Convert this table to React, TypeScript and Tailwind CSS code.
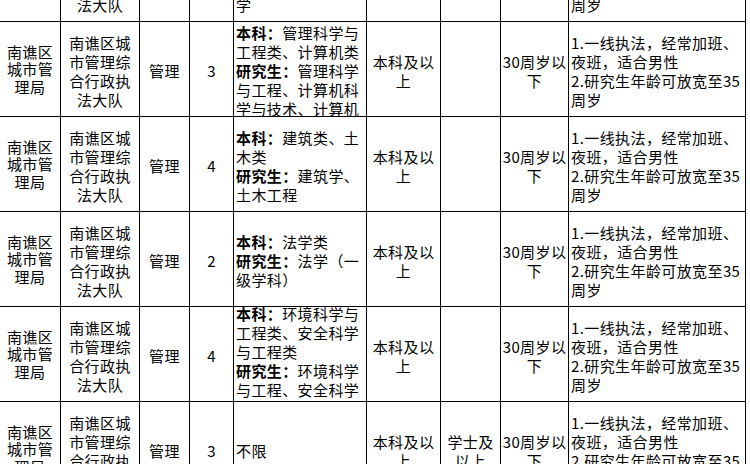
import type { ReactNode } from "react";

type Row = {
  major: string[];
  count: string;
  degree?: string[];
  majorTop?: boolean;
};

const bureau = ["南谯区", "城市管", "理局"];
const unit = ["南谯区城", "市管理综", "合行政执", "法大队"];
const edu = ["本科及以", "上"];
const age = ["30周岁以", "下"];
const note = ["1.一线执法，经常加班、", "夜班，适合男性", "2.研究生年龄可放宽至35", "周岁"];

const rows: Row[] = [
  { major: ["本科：汉语言文学", "、新闻学", "研究生：新闻传播", "学"], count: "2" },
  {
    major: ["本科：管理科学与", "工程类、计算机类", "研究生：管理科学", "与工程、计算机科", "学与技术、计算机"],
    count: "3",
  },
  { major: ["本科：建筑类、土", "木类", "研究生：建筑学、", "土木工程"], count: "4" },
  { major: ["本科：法学类", "研究生：法学（一", "级学科）"], count: "2" },
  {
    major: ["本科：环境科学与", "工程类、安全科学", "与工程类", "研究生：环境科学", "与工程、安全科学", "与工程"],
    count: "4",
    majorTop: true,
  },
  { major: ["不限"], count: "3", degree: ["学士及", "以上"] },
];

function Line({ text }: { text: string }) {
  const m = text.match(/^(本科：|研究生：)(.*)$/);
  if (!m) return <div>{text}</div>;
  return (
    <div>
      <span className="font-bold">{m[1]}</span>
      {m[2]}
    </div>
  );
}

function Cell({
  w,
  left,
  top,
  tight,
  children,
}: {
  w: string;
  left?: boolean;
  top?: boolean;
  tight?: boolean;
  children?: ReactNode;
}) {
  const align = top ? "items-start" : tight ? "items-center leading-[17.5px]" : "items-center pt-[3px]";
  return (
    <div
      className={`${w} flex h-[95px] shrink-0 overflow-hidden border-r border-b border-black whitespace-nowrap ${align} ${
        left ? "justify-start pl-[2px] text-left" : "justify-center text-center"
      }`}
    >
      <div className={top ? "-mt-[3px]" : ""}>{children}</div>
    </div>
  );
}

function Lines({ items }: { items: string[] }) {
  return (
    <>
      {items.map((t, i) => (
        <Line key={i} text={t} />
      ))}
    </>
  );
}

export default function App() {
  return (
    <div className="h-[464px] w-[750px] overflow-hidden bg-white font-['Noto_Sans_CJK_SC',sans-serif] text-[15px] leading-[19px] tracking-[0.4px] text-black">
      <div className="-mt-[73px] flex flex-col">
        {rows.map((r, i) => (
          <div key={i} className="flex">
            <Cell w="w-[61px]" tight>
              <Lines items={bureau} />
            </Cell>
            <Cell w="w-[79px]">
              <Lines items={unit} />
            </Cell>
            <Cell w="w-[50px]">管理</Cell>
            <Cell w="w-[44px]">{r.count}</Cell>
            <Cell w="w-[133px]" left top={r.majorTop}>
              <Lines items={r.major} />
            </Cell>
            <Cell w="w-[74px]">
              <Lines items={edu} />
            </Cell>
            <Cell w="w-[60px]">{r.degree && <Lines items={r.degree} />}</Cell>
            <Cell w="w-[68px]">
              <Lines items={age} />
            </Cell>
            <Cell w="w-[177px]" left>
              <Lines items={note} />
            </Cell>
          </div>
        ))}
      </div>
    </div>
  );
}
